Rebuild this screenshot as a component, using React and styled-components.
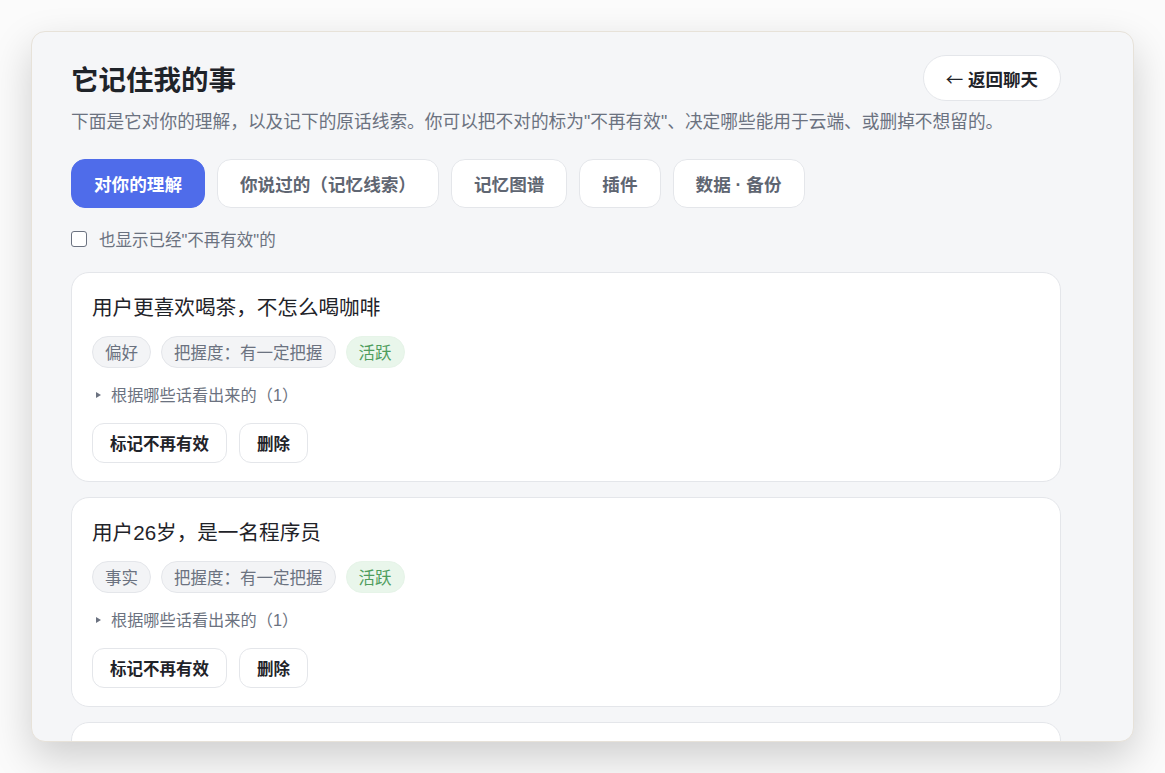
import React, { useState } from 'react'
import styled, { createGlobalStyle } from 'styled-components'

const GlobalStyle = createGlobalStyle`
   html, body {
      margin: 0;
      padding: 0;
      background: #fbfbfb;
      font-family: 'Liberation Sans', 'Noto Sans CJK SC', sans-serif;
   }
   * {
      box-sizing: border-box;
   }
`

const tabs = ['对你的理解', '你说过的（记忆线索）', '记忆图谱', '插件', '数据 · 备份']

const memories = [
   { id: 1, text: '用户更喜欢喝茶，不怎么喝咖啡', kind: '偏好', confidence: '有一定把握', sources: 1 },
   { id: 2, text: '用户26岁，是一名程序员', kind: '事实', confidence: '有一定把握', sources: 1 },
   { id: 3, text: '用户住在杭州', kind: '事实', confidence: '有一定把握', sources: 1 },
]

export default function App() {
   const [active, setActive] = useState(0)
   const [showInvalid, setShowInvalid] = useState(false)

   return (
      <>
         <GlobalStyle />
         <Page>
            <Modal>
               <Inner>
                  <HeaderRow>
                     <Title>它记住我的事</Title>
                     <BackButton>
                        <Arrow>←</Arrow> 返回聊天
                     </BackButton>
                  </HeaderRow>
                  <Subtitle>
                     下面是它对你的理解，以及记下的原话线索。你可以把不对的标为"不再有效"、决定哪些能用于云端、或删掉不想留的。
                  </Subtitle>
                  <Tabs>
                     {tabs.map((t, i) => (
                        <Tab key={t} $active={i === active} onClick={() => setActive(i)}>
                           {t}
                        </Tab>
                     ))}
                  </Tabs>
                  <CheckRow>
                     <CheckBox
                        type="checkbox"
                        checked={showInvalid}
                        onChange={(e) => setShowInvalid(e.target.checked)}
                     />
                     也显示已经"不再有效"的
                  </CheckRow>
                  <CardList>
                     {memories.map((m) => (
                        <Card key={m.id}>
                           <CardTitle>{m.text}</CardTitle>
                           <Chips>
                              <Chip>{m.kind}</Chip>
                              <Chip>把握度：{m.confidence}</Chip>
                              <Chip $green>活跃</Chip>
                           </Chips>
                           <Sources>
                              <summary>根据哪些话看出来的（{m.sources}）</summary>
                           </Sources>
                           <Actions>
                              <ActionButton>标记不再有效</ActionButton>
                              <ActionButton>删除</ActionButton>
                           </Actions>
                        </Card>
                     ))}
                  </CardList>
               </Inner>
            </Modal>
         </Page>
      </>
   )
}

const Page = styled.div`
   height: 100vh;
   padding: 31px;
   display: flex;
`
const Modal = styled.div`
   flex: 1;
   background: #f5f6f8;
   border: 1px solid #e7e2d9;
   border-radius: 14px;
   box-shadow: 0 16px 40px rgba(0, 0, 0, 0.18);
   overflow: hidden;
`
const Inner = styled.div`
   max-width: 1068px;
   padding: 23px 39px 40px;
`
const HeaderRow = styled.div`
   display: flex;
   justify-content: space-between;
   align-items: flex-start;
`
const Title = styled.h1`
   margin: 8px 0 0;
   font-size: 27.5px;
   line-height: 36px;
   font-weight: 700;
   color: #1f2329;
`
const BackButton = styled.button`
   height: 46px;
   padding: 0 22px;
   border: 1px solid #e4e6ea;
   border-radius: 23px;
   background: #fff;
   font-family: inherit;
   font-size: 17.5px;
   font-weight: 700;
   color: #1f2329;
   cursor: pointer;
`
const Arrow = styled.span`
   font-family: 'Noto Sans CJK SC', sans-serif;
   font-weight: 400;
`
const Subtitle = styled.p`
   margin: 8px 0 0;
   font-size: 17.7px;
   line-height: 26px;
   color: #6b7280;
`
const Tabs = styled.div`
   display: flex;
   gap: 12px;
   margin-top: 24px;
`
const Tab = styled.button`
   height: 49px;
   padding: 0 22px;
   border-radius: 14px;
   border: 1px solid ${(p) => (p.$active ? '#4f6cea' : '#e4e6ea')};
   background: ${(p) => (p.$active ? '#4f6cea' : '#fff')};
   color: ${(p) => (p.$active ? '#fff' : '#5f6672')};
   font-family: inherit;
   font-size: 17.6px;
   font-weight: 700;
   cursor: pointer;
`
const CheckRow = styled.label`
   display: flex;
   align-items: center;
   gap: 12px;
   margin-top: 19px;
   height: 24px;
   font-size: 16.5px;
   color: #6b7280;
`
const CheckBox = styled.input`
   appearance: none;
   margin: 0;
   width: 16px;
   height: 16px;
   border: 1.5px solid #6b7280;
   border-radius: 3px;
   background: #fff;
`
const CardList = styled.div`
   display: flex;
   flex-direction: column;
   gap: 15px;
   margin-top: 21px;
`
const Card = styled.div`
   background: #fff;
   border: 1px solid #e4e6ea;
   border-radius: 18px;
   padding: 20px 20px 18px;
`
const CardTitle = styled.div`
   font-size: 20.6px;
   line-height: 30px;
   color: #1f2329;
`
const Chips = styled.div`
   display: flex;
   gap: 10px;
   margin-top: 13px;
`
const Chip = styled.span`
   height: 32px;
   display: inline-flex;
   align-items: center;
   padding: 0 12px;
   border-radius: 16px;
   border: 1px solid ${(p) => (p.$green ? '#e6f4e8' : '#e4e6ea')};
   background: ${(p) => (p.$green ? '#e9f6eb' : '#f3f4f6')};
   color: ${(p) => (p.$green ? '#4f9d5d' : '#6b7280')};
   font-size: 16.5px;
`
const Sources = styled.details`
   margin-top: 15px;
   font-size: 16.2px;
   line-height: 24px;
   color: #6b7280;
   summary {
      list-style: none;
      display: flex;
      align-items: center;
      padding-left: 4px;
      cursor: pointer;
   }
   summary::-webkit-details-marker {
      display: none;
   }
   summary::before {
      content: '';
      width: 0;
      height: 0;
      border-left: 5px solid #6b7280;
      border-top: 3.5px solid transparent;
      border-bottom: 3.5px solid transparent;
      margin-right: 10px;
   }
`
const Actions = styled.div`
   display: flex;
   gap: 12px;
   margin-top: 16px;
`
const ActionButton = styled.button`
   height: 40px;
   padding: 0 17px;
   border: 1px solid #e4e6ea;
   border-radius: 12px;
   background: #fff;
   font-family: inherit;
   font-size: 16.5px;
   font-weight: 700;
   color: #1f2329;
   cursor: pointer;
`
